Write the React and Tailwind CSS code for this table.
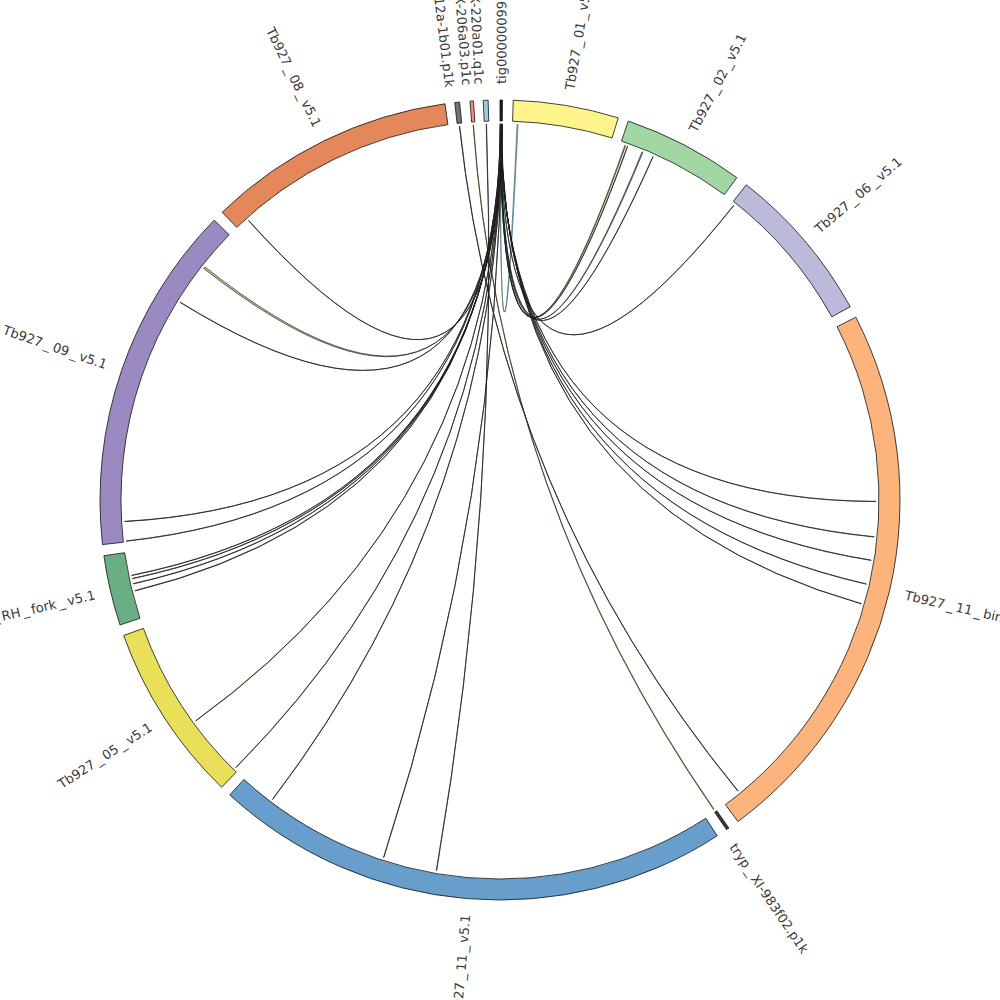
import React from "react";

const CX = 500;
const CY = 500;
const R_OUT = 400;
const R_IN = 379;
const R_LINK = 376;
const R_LABEL = 416;

const pt = (r, deg) => {
  const a = (deg * Math.PI) / 180;
  return [CX + r * Math.sin(a), CY - r * Math.cos(a)];
};
const f = (p) => `${p[0].toFixed(2)} ${p[1].toFixed(2)}`;

// contigs on the ring, angles in degrees clockwise from top
const contigs = [
  { name: "tig00000099", a: 0.0, b: 0.35, fill: "#1c1c28", label: 0.15 },
  { name: "Tb927_01_v5.1", a: 1.9, b: 17.2, fill: "#fdf58b" },
  { name: "Tb927_02_v5.1", a: 18.7, b: 36.3, fill: "#a1d7a3" },
  { name: "Tb927_06_v5.1", a: 38.0, b: 61.1, fill: "#bcbadb" },
  { name: "Tb927_11_bin_v5.1", a: 62.8, b: 143.5, fill: "#fdb37c" },
  { name: "tryp_XI-983f02.p1k", a: 145.1, b: 145.5, fill: "#3a3a3a", label: 145.9 },
  { name: "Tb927_11_v5.1", a: 147.1, b: 222.5, fill: "#689ecb" },
  { name: "Tb927_05_v5.1", a: 224.1, b: 250.2, fill: "#e9df59" },
  { name: "Tb927_RH_fork_v5.1", a: 251.8, b: 262.0, fill: "#6aaf84" },
  { name: "Tb927_09_v5.1", a: 263.6, b: 314.4, fill: "#9b8ac1" },
  { name: "Tb927_08_v5.1", a: 316.0, b: 352.1, fill: "#e4875a" },
  { name: "tryp_X-112a-1b01.p1k", a: 353.5, b: 354.2, fill: "#727272", label: 353.1 },
  { name: "tryp_X-206a03.p1c", a: 355.7, b: 356.2, fill: "#f08e7f", label: 355.5 },
  { name: "tryp_X-220a01.q1c", a: 357.6, b: 358.3, fill: "#9ec9e3", label: 357.2 },
];

// links: [source angle, source width, target angle, target width, fill, stroke]
const links = [
  [0.02, 0.05, 2.6, 0.15, "#8fb4cf", "#4f6f86"],
  [0.05, 0.03, 19.4, 0.12, "#f3e77a", "#2a2a1a"],
  [0.07, 0.02, 19.8, 0.06, "#e0d870", "#1a1a1a"],
  [0.09, 0.03, 22.2, 0.14, "#7fbf84", "#1f2f1f"],
  [0.11, 0.02, 24.0, 0.05, "#a1d7a3", "#1a1a1a"],
  [0.13, 0.02, 38.4, 0.05, "#bcbadb", "#1a1a1a"],
  [0.15, 0.02, 90.2, 0.05, "#fdb37c", "#1a1a1a"],
  [0.17, 0.02, 95.6, 0.05, "#fdb37c", "#1a1a1a"],
  [0.19, 0.02, 99.2, 0.05, "#fdb37c", "#1a1a1a"],
  [0.21, 0.02, 102.9, 0.05, "#fdb37c", "#1a1a1a"],
  [0.23, 0.02, 106.0, 0.05, "#fdb37c", "#1a1a1a"],
  [353.8, 0.05, 140.7, 0.06, "#727272", "#1a1a1a"],
  [355.9, 0.05, 145.3, 0.1, "#d8c860", "#3a3218"],
  [357.9, 0.05, 189.7, 0.05, "#9ec9e3", "#1a1a1a"],
  [0.25, 0.02, 198.0, 0.05, "#689ecb", "#1a1a1a"],
  [0.27, 0.02, 217.2, 0.05, "#689ecb", "#1a1a1a"],
  [0.28, 0.02, 224.6, 0.05, "#e9df59", "#1a1a1a"],
  [0.29, 0.02, 234.0, 0.05, "#e9df59", "#1a1a1a"],
  [0.3, 0.02, 256.0, 0.06, "#6aaf84", "#1a1a1a"],
  [0.31, 0.02, 257.1, 0.06, "#6aaf84", "#1a1a1a"],
  [0.32, 0.02, 257.9, 0.06, "#6aaf84", "#1a1a1a"],
  [0.33, 0.02, 258.4, 0.06, "#6aaf84", "#1a1a1a"],
  [0.04, 0.02, 263.7, 0.05, "#9b8ac1", "#1a1a1a"],
  [0.06, 0.02, 266.7, 0.05, "#9b8ac1", "#1a1a1a"],
  [0.08, 0.02, 301.7, 0.05, "#9b8ac1", "#1a1a1a"],
  [0.1, 0.06, 308.0, 0.3, "#c9c48a", "#222222"],
  [0.12, 0.02, 318.0, 0.05, "#e4875a", "#1a1a1a"],
];

function segmentPath(a, b) {
  const large = b - a > 180 ? 1 : 0;
  return [
    `M ${f(pt(R_OUT, a))}`,
    `A ${R_OUT} ${R_OUT} 0 ${large} 1 ${f(pt(R_OUT, b))}`,
    `L ${f(pt(R_IN, b))}`,
    `A ${R_IN} ${R_IN} 0 ${large} 0 ${f(pt(R_IN, a))}`,
    "Z",
  ].join(" ");
}

function linkPath([s, sw, t, tw]) {
  const s1 = pt(R_LINK, s);
  const s2 = pt(R_LINK, s + sw);
  const t1 = pt(R_LINK, t);
  const t2 = pt(R_LINK, t + tw);
  return [
    `M ${f(s1)}`,
    `A ${R_LINK} ${R_LINK} 0 0 1 ${f(s2)}`,
    `Q ${CX} ${CY} ${f(t1)}`,
    `A ${R_LINK} ${R_LINK} 0 0 1 ${f(t2)}`,
    `Q ${CX} ${CY} ${f(s1)}`,
    "Z",
  ].join(" ");
}

function Label({ c }) {
  const ang = c.label ?? (c.a + c.b) / 2;
  const p = pt(R_LABEL, ang);
  const norm = ((ang % 360) + 360) % 360;
  const outward = norm < 180;
  const rot = outward ? norm - 90 : norm + 90;
  const parts = c.name.split("_");
  return (
    <text
      x={p[0]}
      y={p[1]}
      transform={`rotate(${rot} ${p[0]} ${p[1]})`}
      textAnchor={outward ? "start" : "end"}
      dominantBaseline="central"
      fontSize="13"
      fill="#3a3a3a"
      style={{ fontFamily: '"DejaVu Sans", Verdana, sans-serif' }}
    >
      {parts.map((part, i) => (
        <React.Fragment key={i}>
          {i > 0 && <tspan dx="2.5">_</tspan>}
          <tspan dx={i > 0 ? "2.5" : "0"}>{part}</tspan>
        </React.Fragment>
      ))}
    </text>
  );
}

export default function App() {
  return (
    <div className="w-[1000px] h-[1000px] bg-white overflow-hidden">
      <svg width="1000" height="1000" viewBox="0 0 1000 1000" className="block">
        {/* links */}
        <g>
          {links.map((l, i) => (
            <path key={i} d={linkPath(l)} fill={l[4]} stroke={l[5]} strokeWidth="0.7" />
          ))}
        </g>

        {/* ideogram ring */}
        <g>
          {contigs.map((c) => (
            <path key={c.name} d={segmentPath(c.a, c.b)} fill={c.fill} stroke="#111" strokeWidth="0.8" />
          ))}
        </g>

        {/* labels */}
        <g>
          {contigs.map((c) => (
            <Label key={c.name} c={c} />
          ))}
        </g>
      </svg>
    </div>
  );
}
